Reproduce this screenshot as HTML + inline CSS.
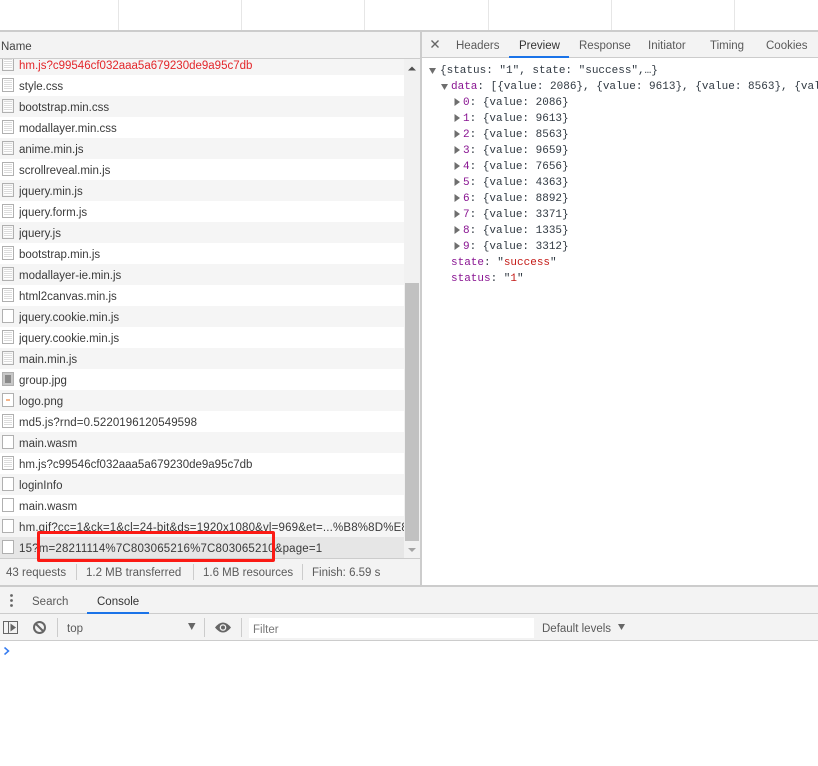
<!DOCTYPE html>
<html>
<head>
<meta charset="utf-8">
<style>
html,body{margin:0;padding:0;background:#fff}
body{position:relative;width:818px;height:766px;overflow:hidden;font-family:"Liberation Sans",sans-serif;font-size:11.5px;color:#333}
.a{position:absolute;white-space:nowrap}
.v{position:absolute;top:0;width:1px;height:30px;background:#e6e6e6}
#list{position:absolute;left:0;top:59px;width:404px;height:499px;overflow:hidden}
.r{position:absolute;left:0;width:404px;height:21px;line-height:21px;white-space:nowrap;overflow:hidden;background:#f5f5f5}
.w{background:#fff}
.r b{font-weight:normal;position:absolute;left:19px;top:2px;width:385px;overflow:hidden;color:#3a3a3a}
.i{position:absolute;left:2px;top:3px;width:10px;height:12px;border:1px solid #b0b0b0;background:#fff}
.d{background:repeating-linear-gradient(to bottom,#fff 0,#fff 1px,#dcdcdc 1px,#dcdcdc 2px);background-clip:content-box;padding:1px;width:8px;height:10px}
.m{font-family:"Liberation Mono",monospace;font-size:11px;line-height:16px;height:16px;color:#303942}
.p{color:#881391}
.s{color:#c41a16}
.tab{position:absolute;top:39px;color:#5a5a5a;white-space:nowrap;line-height:14px}
</style>
</head>
<body>
<div class="v" style="left:118px"></div>
<div class="v" style="left:241px"></div>
<div class="v" style="left:364px"></div>
<div class="v" style="left:488px"></div>
<div class="v" style="left:611px"></div>
<div class="v" style="left:734px"></div>

<div class="a" style="left:0;top:30px;width:818px;height:2px;background:#ccc"></div>

<!-- Name header -->
<div class="a" style="left:0;top:32px;width:420px;height:26px;background:#f3f3f3"></div>
<div class="a" style="left:0;top:58px;width:420px;height:1px;background:#ccc"></div>
<div class="a" style="left:1px;top:40px;color:#444;line-height:14px">Name</div>

<!-- Rows -->
<div id="list">
<div class="r" style="top:-5px"><span class="i d"></span><b style="color:#e3262a">hm.js?c99546cf032aaa5a679230de9a95c7db</b></div>
<div class="r w" style="top:16px"><span class="i d"></span><b>style.css</b></div>
<div class="r" style="top:37px"><span class="i d"></span><b>bootstrap.min.css</b></div>
<div class="r w" style="top:58px"><span class="i d"></span><b>modallayer.min.css</b></div>
<div class="r" style="top:79px"><span class="i d"></span><b>anime.min.js</b></div>
<div class="r w" style="top:100px"><span class="i d"></span><b>scrollreveal.min.js</b></div>
<div class="r" style="top:121px"><span class="i d"></span><b>jquery.min.js</b></div>
<div class="r w" style="top:142px"><span class="i d"></span><b>jquery.form.js</b></div>
<div class="r" style="top:163px"><span class="i d"></span><b>jquery.js</b></div>
<div class="r w" style="top:184px"><span class="i d"></span><b>bootstrap.min.js</b></div>
<div class="r" style="top:205px"><span class="i d"></span><b>modallayer-ie.min.js</b></div>
<div class="r w" style="top:226px"><span class="i d"></span><b>html2canvas.min.js</b></div>
<div class="r" style="top:247px"><span class="i"></span><b>jquery.cookie.min.js</b></div>
<div class="r w" style="top:268px"><span class="i d"></span><b>jquery.cookie.min.js</b></div>
<div class="r" style="top:289px"><span class="i d"></span><b>main.min.js</b></div>
<div class="r w" style="top:310px"><span class="i" style="background:#8a8a8a;box-shadow:inset 0 0 0 2px #c8c8c8"></span><b>group.jpg</b></div>
<div class="r" style="top:331px"><span class="i"><span style="position:absolute;left:3px;top:5px;width:4px;height:2px;background:#f5b58a"></span></span><b>logo.png</b></div>
<div class="r w" style="top:352px"><span class="i d"></span><b style="letter-spacing:.09px">md5.js?rnd=0.5220196120549598</b></div>
<div class="r" style="top:373px"><span class="i"></span><b>main.wasm</b></div>
<div class="r w" style="top:394px"><span class="i d"></span><b>hm.js?c99546cf032aaa5a679230de9a95c7db</b></div>
<div class="r" style="top:415px"><span class="i"></span><b>loginInfo</b></div>
<div class="r w" style="top:436px"><span class="i"></span><b>main.wasm</b></div>
<div class="r" style="top:457px"><span class="i"></span><b style="letter-spacing:.17px">hm.gif?cc=1&amp;ck=1&amp;cl=24-bit&amp;ds=1920x1080&amp;vl=969&amp;et=...%B8%8D%E8%B6%B3</b></div>
<div class="r" style="top:478px;background:#e6e6e6"><span class="i"></span><b style="letter-spacing:.18px">15?m=28211114%7C803065216%7C803065210&amp;page=1</b></div>
</div>

<!-- Scrollbar -->
<div class="a" style="left:404px;top:59px;width:16px;height:499px;background:#f1f1f1"></div>
<div class="a" style="left:405px;top:283px;width:14px;height:258px;background:#c1c1c1"></div>
<svg class="a" style="left:404px;top:59px" width="16" height="499"><path d="M4 11.500L8 7.500L12 11.500Z" fill="#505050"/><path d="M4 489L12 489L8 493Z" fill="#a3a3a3"/></svg>

<!-- Divider -->
<div class="a" style="left:420px;top:32px;width:2px;height:554px;background:#ccc"></div>

<!-- Status bar -->
<div class="a" style="left:0;top:558px;width:420px;height:1px;background:#ccc"></div>
<div class="a" style="left:0;top:559px;width:420px;height:26px;background:#f3f3f3"></div>
<div class="a" style="left:6px;top:566px;color:#5a5a5a;line-height:14px">43 requests</div>
<div class="a" style="left:76px;top:564px;width:1px;height:16px;background:#ccc"></div>
<div class="a" style="left:86px;top:566px;color:#5a5a5a;line-height:14px">1.2 MB transferred</div>
<div class="a" style="left:193px;top:564px;width:1px;height:16px;background:#ccc"></div>
<div class="a" style="left:203px;top:566px;color:#5a5a5a;line-height:14px">1.6 MB resources</div>
<div class="a" style="left:302px;top:564px;width:1px;height:16px;background:#ccc"></div>
<div class="a" style="left:312px;top:566px;color:#5a5a5a;line-height:14px">Finish: 6.59 s</div>

<!-- Preview tab bar -->
<div class="a" style="left:422px;top:32px;width:396px;height:25px;background:#f3f3f3"></div>
<div class="a" style="left:422px;top:57px;width:396px;height:1px;background:#ccc"></div>
<svg class="a" style="left:430px;top:39px" width="11" height="11"><path d="M1.500 1.500L8.500 8.500M8.500 1.500L1.500 8.500" stroke="#666" stroke-width="1.400" fill="none"/></svg>
<div class="tab" style="left:456px">Headers</div>
<div class="tab" style="left:519px;color:#333">Preview</div>
<div class="tab" style="left:579px">Response</div>
<div class="tab" style="left:648px">Initiator</div>
<div class="tab" style="left:710px">Timing</div>
<div class="tab" style="left:766px">Cookies</div>
<div class="a" style="left:509px;top:56px;width:60px;height:2px;background:#1a73e8"></div>

<!-- Tree -->
<svg class="a" style="left:425px;top:61px" width="40" height="200">
<path d="M4 7L11 7L7.500 13Z" fill="#6e6e6e"/>
<path d="M16 23L23 23L19.500 29Z" fill="#6e6e6e"/>
<g fill="#6e6e6e">
<path d="M29.500 37L29.500 45L35 41Z"/>
<path d="M29.500 53L29.500 61L35 57Z"/>
<path d="M29.500 69L29.500 77L35 73Z"/>
<path d="M29.500 85L29.500 93L35 89Z"/>
<path d="M29.500 101L29.500 109L35 105Z"/>
<path d="M29.500 117L29.500 125L35 121Z"/>
<path d="M29.500 133L29.500 141L35 137Z"/>
<path d="M29.500 149L29.500 157L35 153Z"/>
<path d="M29.500 165L29.500 173L35 169Z"/>
<path d="M29.500 181L29.500 189L35 185Z"/>
</g>
</svg>
<div class="a m" style="left:440px;top:63px">{status: "1", state: "success",…}</div>
<div class="a m" style="left:451px;top:79px;width:367px;overflow:hidden"><span class="p">data</span>: [{value: 2086}, {value: 9613}, {value: 8563}, {value: 9659}]</div>
<div class="a m" style="left:463px;top:95px"><span class="p">0</span>: {value: 2086}</div>
<div class="a m" style="left:463px;top:111px"><span class="p">1</span>: {value: 9613}</div>
<div class="a m" style="left:463px;top:127px"><span class="p">2</span>: {value: 8563}</div>
<div class="a m" style="left:463px;top:143px"><span class="p">3</span>: {value: 9659}</div>
<div class="a m" style="left:463px;top:159px"><span class="p">4</span>: {value: 7656}</div>
<div class="a m" style="left:463px;top:175px"><span class="p">5</span>: {value: 4363}</div>
<div class="a m" style="left:463px;top:191px"><span class="p">6</span>: {value: 8892}</div>
<div class="a m" style="left:463px;top:207px"><span class="p">7</span>: {value: 3371}</div>
<div class="a m" style="left:463px;top:223px"><span class="p">8</span>: {value: 1335}</div>
<div class="a m" style="left:463px;top:239px"><span class="p">9</span>: {value: 3312}</div>
<div class="a m" style="left:451px;top:255px"><span class="p">state</span>: "<span class="s">success</span>"</div>
<div class="a m" style="left:451px;top:271px"><span class="p">status</span>: "<span class="s">1</span>"</div>

<!-- Red highlight -->
<div class="a" style="left:37px;top:531px;width:232px;height:25px;border:3px solid #fb1a14;border-radius:2px"></div>

<!-- Drawer -->
<div class="a" style="left:0;top:585px;width:818px;height:2px;background:#ccc"></div>
<div class="a" style="left:0;top:587px;width:818px;height:26px;background:#f3f3f3"></div>
<div class="a" style="left:0;top:613px;width:818px;height:1px;background:#ccc"></div>
<div class="a" style="left:0;top:614px;width:818px;height:26px;background:#f3f3f3"></div>
<div class="a" style="left:0;top:640px;width:818px;height:1px;background:#ccc"></div>
<svg class="a" style="left:9px;top:593px" width="5" height="16"><g fill="#666"><circle cx="2.500" cy="2.500" r="1.400"/><circle cx="2.500" cy="7.500" r="1.400"/><circle cx="2.500" cy="12.500" r="1.400"/></g></svg>
<div class="a" style="left:32px;top:595px;color:#5a5a5a;line-height:14px">Search</div>
<div class="a" style="left:97px;top:595px;color:#333;line-height:14px">Console</div>
<div class="a" style="left:87px;top:612px;width:62px;height:2px;background:#1a73e8"></div>

<svg class="a" style="left:0;top:614px" width="250" height="26">
<rect x="3.500" y="7.500" width="14" height="12" fill="none" stroke="#666"/>
<path d="M8.500 7.500L8.500 19.500" stroke="#666"/>
<path d="M10.500 9.500L10.500 17.500L16 13.500Z" fill="#666"/>
<circle cx="39.500" cy="13.500" r="5.500" fill="none" stroke="#666" stroke-width="2"/>
<path d="M35.500 9.500L43.500 17.500" stroke="#666" stroke-width="2"/>
<path d="M57.500 4L57.500 23" stroke="#ccc"/>
<path d="M188 9L195.500 9L191.750 16Z" fill="#666"/>
<path d="M204.500 4L204.500 23" stroke="#ccc"/>
<path d="M215 13.500Q223 3.500 231 13.500Q223 23.500 215 13.500Z" fill="#666"/>
<circle cx="223" cy="13.500" r="3.300" fill="#f3f3f3"/>
<circle cx="223" cy="13.500" r="2" fill="#666"/>
<path d="M241.500 4L241.500 23" stroke="#ccc"/>
</svg>
<div class="a" style="left:67px;top:622px;color:#5a5a5a;line-height:14px">top</div>
<div class="a" style="left:249px;top:618px;width:285px;height:20px;background:#fff"></div>
<div class="a" style="left:253px;top:623px;color:#777;line-height:14px">Filter</div>
<div class="a" style="left:542px;top:622px;color:#5a5a5a;line-height:14px">Default levels</div>
<svg class="a" style="left:617px;top:623px" width="9" height="8"><path d="M1 1L8 1L4.500 7Z" fill="#666"/></svg>
<svg class="a" style="left:3px;top:646px" width="8" height="10"><path d="M1.500 1.500L5.500 5L1.500 8.500" fill="none" stroke="#367cf1" stroke-width="1.500"/></svg>
</body>
</html>
